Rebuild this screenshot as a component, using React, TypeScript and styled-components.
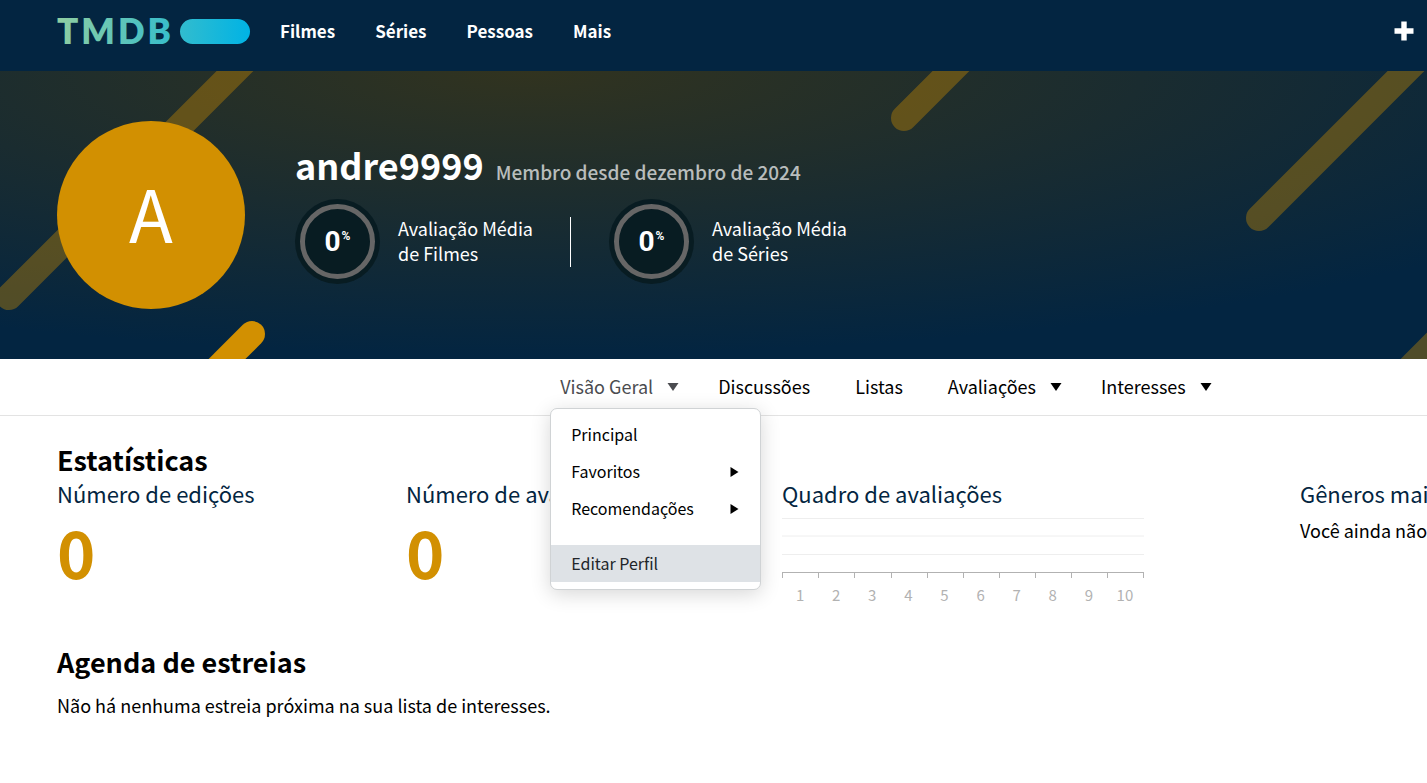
import React from "react";
import styled, { createGlobalStyle } from "styled-components";

const GlobalStyle = createGlobalStyle`
  *, *::before, *::after { box-sizing: border-box; }
  body {
    margin: 0;
    background: #fff;
    color: #000;
    font-family: "Noto Sans CJK SC", "Noto Sans", sans-serif;
    font-size: 18px;
    line-height: 25px;
    overflow-x: hidden;
  }
  h1, h2, h3, p, ul { margin: 0; padding: 0; }
  ul { list-style: none; }
  a { color: inherit; text-decoration: none; }
  button { font: inherit; color: inherit; background: none; border: 0; padding: 0; cursor: pointer; }
`;

const Header = styled.header`
  display: flex;
  align-items: center;
  height: 71px;
  padding: 0 13px 8px 57px;
  background: #032541;
  color: #fff;
`;

const LogoLink = styled.a`
  display: block;
  height: 25px;
  margin-right: 30px;

  svg { display: block; overflow: visible; }
`;

const LogoText = styled.text`
  font-family: Lato, sans-serif;
  font-size: 35px;
  font-weight: 800;
  letter-spacing: 3px;
`;

const MainNav = styled.nav`
  display: flex;
  gap: 40px;
  flex: 1;
  padding-bottom: 2px;
  font-weight: 700;
  font-size: 17px;
`;

const AddButton = styled.button`
  display: flex;
  padding-bottom: 2px;

  svg { display: block; }
`;

const Banner = styled.section`
  position: relative;
  display: flex;
  align-items: center;
  gap: 50px;
  height: 288px;
  padding: 0 57px;
  overflow: hidden;
  color: #fff;
  background: radial-gradient(123% 141% at 37% 0, #31331f 0%, #032541 70%);
`;

const Slashes = styled.svg`
  position: absolute;
  inset: 0;
  width: 100%;
  height: 100%;
`;

const Avatar = styled.a`
  position: relative;
  display: flex;
  align-items: center;
  justify-content: center;
  flex: none;
  width: 188px;
  height: 188px;
  padding-bottom: 6px;
  border-radius: 50%;
  background: #d29001;
  font-size: 72px;
  line-height: 72px;
`;

const Profile = styled.div`
  position: relative;
  display: flex;
  flex-direction: column;
  gap: 16px;
`;

const NameRow = styled.div`
  display: flex;
  align-items: baseline;
  gap: 12px;
  height: 37px;
`;

const UserName = styled.h1`
  font-size: 36px;
  line-height: 37px;
  font-weight: 700;
`;

const MemberSince = styled.h3`
  font-size: 19px;
  line-height: 30px;
  font-weight: 500;
  color: rgba(255, 255, 255, 0.7);
`;

const Ratings = styled.div`
  display: flex;
  align-items: center;
  gap: 38px;
`;

const Rating = styled.a`
  display: flex;
  align-items: center;
  gap: 18px;
`;

const Ring = styled.span`
  display: flex;
  width: 85px;
  height: 85px;
  padding: 5px;
  border-radius: 50%;
  background: #081c22;
`;

const RingTrack = styled.span`
  display: flex;
  align-items: center;
  justify-content: center;
  gap: 1px;
  flex: 1;
  border: 5px solid #666;
  border-radius: 50%;
  font-family: Roboto, sans-serif;
  font-size: 28px;
  font-weight: 700;

  sup {
    padding-bottom: 12px;
    font-size: 12px;
    line-height: 12px;
  }
`;

const RatingLabel = styled.span`
  width: 134px;
  padding-bottom: 2px;
  white-space: pre;
`;

const Divider = styled.span`
  width: 1px;
  height: 50px;
  background: #fff;
`;

const SubNav = styled.nav`
  display: flex;
  justify-content: center;
  height: 57px;
  padding: 0 0 2px 339px;
  border-bottom: 1px solid #e3e3e3;

  > ul {
    display: flex;
    align-items: center;
    gap: 45px;
  }
`;

const Tab = styled.li`
  position: relative;
`;

const TabButton = styled.button<{ $active?: boolean }>`
  display: flex;
  align-items: center;
  gap: 14px;
  white-space: nowrap;
  color: ${(p) => (p.$active ? "#4b4c50" : "#000")};

  svg { display: block; margin: 2px -6px 0 0; }
`;

const Menu = styled.ul`
  position: absolute;
  z-index: 2;
  top: 34px;
  left: -10px;
  width: 211px;
  padding: 7px 0;
  border: 1px solid #d0d3d5;
  border-radius: 7px;
  background: #fff;
  box-shadow: 0 4px 20px rgba(0, 0, 0, 0.16);
  font-size: 16px;
`;

const MenuItem = styled.li<{ $highlighted?: boolean }>`
  margin-top: ${(p) => (p.$highlighted ? "18px" : "0")};
  background: ${(p) => (p.$highlighted ? "#dee2e6" : "transparent")};
  color: ${(p) => (p.$highlighted ? "#212529" : "#000")};

  a {
    display: flex;
    align-items: center;
    justify-content: space-between;
    height: 37px;
    padding: 0 21px 0 20px;
  }

  svg { display: block; margin-top: 2px; }
`;

const Main = styled.main`
  padding: 26px 0 40px 57px;
  overflow: hidden;
`;

const SectionTitle = styled.h2`
  font-size: 27px;
  line-height: 36px;
  font-weight: 700;
`;

const StatGrid = styled.div`
  display: grid;
  grid-template-columns: minmax(0, 349fr) minmax(0, 376fr) minmax(0, 518fr) minmax(0, 127fr);
  height: 166px;
  white-space: nowrap;
`;

const StatTitle = styled.h3`
  font-size: 22px;
  line-height: 30px;
  font-weight: 400;
  color: #032541;
`;

const StatValue = styled.p`
  font-size: 65px;
  line-height: 86px;
  font-weight: 700;
  color: #d29001;
`;

const StatNote = styled.p`
  padding-top: 10px;
`;

const Chart = styled.div`
  width: 363px;
  padding-top: 10px;

  svg { display: block; }
`;

const ChartLabels = styled.div`
  display: grid;
  grid-template-columns: repeat(10, 1fr);
  padding: 3px 2px 0 0;
  font-size: 15px;
  text-align: center;
  color: #b2b2b2;
`;

const Note = styled.p`
  padding-top: 13px;
`;

function CaretDown() {
  return (
    <svg width="12" height="8" viewBox="0 0 12 8" fill="currentColor" aria-hidden="true">
      <path d="M0.5 0h11L6 8z" />
    </svg>
  );
}

function CaretRight() {
  return (
    <svg width="9" height="10" viewBox="0 0 9 10" fill="currentColor" aria-hidden="true">
      <path d="M0.5 0L8.5 5L0.5 10z" />
    </svg>
  );
}

function Logo() {
  return (
    <LogoLink href="#" aria-label="TMDB">
      <svg width="193" height="25" viewBox="0 0 193 25">
        <defs>
          <linearGradient id="logo" gradientUnits="userSpaceOnUse" x1="0" y1="12" x2="193" y2="12">
            <stop offset="0" stopColor="#90cea1" />
            <stop offset="0.56" stopColor="#3cbec9" />
            <stop offset="1" stopColor="#00b3e5" />
          </linearGradient>
        </defs>
        <LogoText x="0" y="25" fill="url(#logo)">TMDB</LogoText>
        <rect x="123" y="0" width="70" height="25" rx="12.5" fill="url(#logo)" />
      </svg>
    </LogoLink>
  );
}

function BannerSlashes() {
  return (
    <Slashes aria-hidden="true">
      <g stroke="#d29001" strokeWidth="26" strokeLinecap="round">
        <g opacity="0.37">
          <line x1="9" y1="226" x2="265" y2="-30" />
          <line x1="904" y1="47" x2="981" y2="-30" />
          <line x1="1259" y1="147" x2="1436" y2="-30" />
          <line x1="1378" y1="329" x2="1518" y2="189" />
        </g>
        <line x1="252" y1="263" x2="202" y2="313" />
      </g>
    </Slashes>
  );
}

function Score({ label }: { label: string }) {
  return (
    <Rating href="#">
      <Ring>
        <RingTrack>
          0<sup>%</sup>
        </RingTrack>
      </Ring>
      <RatingLabel>{label}</RatingLabel>
    </Rating>
  );
}

const tabs = [
  { name: "Visão Geral", caret: true, active: true },
  { name: "Discussões" },
  { name: "Listas" },
  { name: "Avaliações", caret: true },
  { name: "Interesses", caret: true },
];

const menu = [
  { name: "Principal" },
  { name: "Favoritos", nested: true },
  { name: "Recomendações", nested: true },
  { name: "Editar Perfil", highlighted: true },
];

const scores = [1, 2, 3, 4, 5, 6, 7, 8, 9, 10];

export default function App() {
  return (
    <>
      <GlobalStyle />
      <Header>
        <Logo />
        <MainNav>
          {["Filmes", "Séries", "Pessoas", "Mais"].map((name) => (
            <a key={name} href="#">{name}</a>
          ))}
        </MainNav>
        <AddButton aria-label="Adicionar">
          <svg width="20" height="20" viewBox="0 0 20 20">
            <path d="M10 0.5V19.5M0.5 10H19.5" stroke="#fff" strokeWidth="5.4" />
          </svg>
        </AddButton>
      </Header>

      <Banner>
        <BannerSlashes />
        <Avatar href="#">A</Avatar>
        <Profile>
          <NameRow>
            <UserName>andre9999</UserName>
            <MemberSince>Membro desde dezembro de 2024</MemberSince>
          </NameRow>
          <Ratings>
            <Score label={"Avaliação Média\nde Filmes"} />
            <Divider />
            <Score label={"Avaliação Média\nde Séries"} />
          </Ratings>
        </Profile>
      </Banner>

      <SubNav>
        <ul>
          {tabs.map((tab) => (
            <Tab key={tab.name}>
              <TabButton $active={tab.active}>
                {tab.name}
                {tab.caret && <CaretDown />}
              </TabButton>
              {tab.active && (
                <Menu>
                  {menu.map((item) => (
                    <MenuItem key={item.name} $highlighted={item.highlighted}>
                      <a href="#">
                        {item.name}
                        {item.nested && <CaretRight />}
                      </a>
                    </MenuItem>
                  ))}
                </Menu>
              )}
            </Tab>
          ))}
        </ul>
      </SubNav>

      <Main>
        <section>
          <SectionTitle>Estatísticas</SectionTitle>
          <StatGrid>
            <div>
              <StatTitle>Número de edições</StatTitle>
              <StatValue>0</StatValue>
            </div>
            <div>
              <StatTitle>Número de avaliações</StatTitle>
              <StatValue>0</StatValue>
            </div>
            <div>
              <StatTitle>Quadro de avaliações</StatTitle>
              <Chart>
                <svg width="363" height="61" viewBox="0 0 363 61" fill="none" aria-hidden="true">
                  <path d="M0 0.5H362M0 18H362M0 36.5H362" stroke="#eee" />
                  <path d="M0 54.5H362" stroke="#b2b2b2" />
                  {[0, 36, 72, 109, 145, 181, 217, 253, 289, 325, 361].map((x) => (
                    <path key={x} d={`M${x + 0.5} 54V60`} stroke="#b2b2b2" />
                  ))}
                </svg>
                <ChartLabels>
                  {scores.map((n) => (
                    <span key={n}>{n}</span>
                  ))}
                </ChartLabels>
              </Chart>
            </div>
            <div>
              <StatTitle>Gêneros mais</StatTitle>
              <StatNote>Você ainda não</StatNote>
            </div>
          </StatGrid>
        </section>
        <section>
          <SectionTitle>Agenda de estreias</SectionTitle>
          <Note>Não há nenhuma estreia próxima na sua lista de interesses.</Note>
        </section>
      </Main>
    </>
  );
}
